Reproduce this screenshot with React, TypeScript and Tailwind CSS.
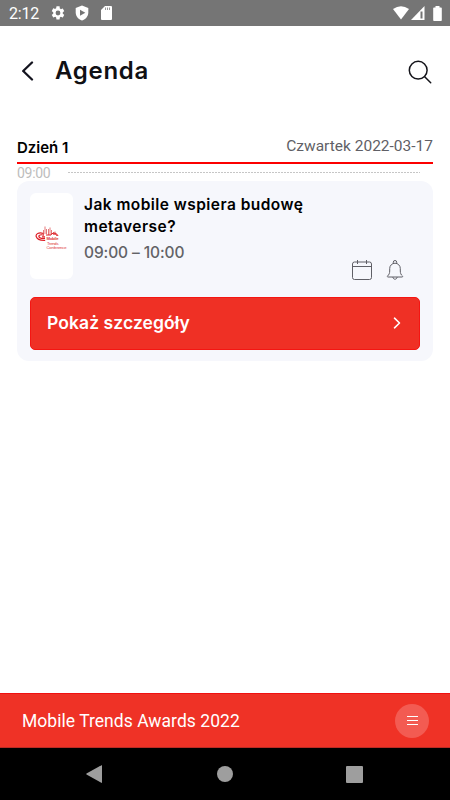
import React from "react";

const StatusBar = () => (
  <div className="flex h-[26px] items-center bg-[#757575] pl-[9px] pr-2 text-white">
    <span className="w-[41px] pt-[2px] text-[16px] leading-none tracking-[-0.2px]">2:12</span>
    <svg className="size-4" viewBox="0 0 24 24" fill="currentColor">
      <path d="M19.14 12.94c.04-.3.06-.61.06-.94s-.02-.64-.07-.94l2.03-1.58a.5.5 0 0 0 .12-.61l-1.92-3.32a.49.49 0 0 0-.59-.22l-2.39.96a7 7 0 0 0-1.62-.94l-.36-2.54A.48.48 0 0 0 13.92 2h-3.84a.47.47 0 0 0-.47.41l-.36 2.54c-.59.24-1.13.57-1.62.94l-2.39-.96a.48.48 0 0 0-.59.22L2.74 8.87a.48.48 0 0 0 .12.61l2.03 1.58a7 7 0 0 0 0 1.88l-2.03 1.58a.5.5 0 0 0-.12.61l1.92 3.32c.12.22.37.29.59.22l2.39-.96c.5.38 1.03.7 1.62.94l.36 2.54c.05.24.24.41.48.41h3.84c.24 0 .44-.17.47-.41l.36-2.54a7 7 0 0 0 1.62-.94l2.39.96c.22.08.47 0 .59-.22l1.92-3.32a.48.48 0 0 0-.12-.61zM12 15.6A3.6 3.6 0 1 1 12 8.4a3.6 3.6 0 0 1 0 7.2z" />
    </svg>
    <svg className="ml-[9px] h-4 w-[14px]" viewBox="0 0 14 16">
      <path d="M7 0.5 13.300 3v4.600C13.300 11.300 10.700 14.400 7 15.500 3.300 14.400.7 11.300.7 7.600V3z" fill="currentColor" />
      <path d="M5 4.700v6L10.300 7.700z" fill="#757575" />
    </svg>
    <svg className="ml-[12px] h-[14px] w-[11px]" viewBox="0 0 11 14">
      <path d="M4 0h6a1 1 0 0 1 1 1v12a1 1 0 0 1-1 1H1a1 1 0 0 1-1-1V4z" fill="currentColor" />
      <path d="M4.500 1.500v2.500M6.500 1.500v2.500M8.500 1.500v2.500" stroke="#9a9a9a" strokeWidth="1" />
    </svg>
    <svg className="ml-auto h-[14px] w-4" viewBox="0 0 16 14" fill="currentColor">
      <path d="M0 3Q8-2.600 16 3L8 13.500z" />
    </svg>
    <svg className="ml-[2px] h-[14px] w-[14px]" viewBox="0 0 14 14">
      <path d="M13.500 0v14H0z" fill="currentColor" />
      <path d="M10.500 5.500v7" stroke="#757575" strokeWidth="2" />
    </svg>
    <svg className="ml-[8px] h-[15px] w-[9px]" viewBox="0 0 9 15" fill="currentColor">
      <path d="M2.500 0h4v1.500H8a.8.8 0 0 1 .8.8v11.900a.8.8 0 0 1-.8.8H1a.8.8 0 0 1-.8-.8V2.300a.8.8 0 0 1 .8-.8h1.500z" />
    </svg>
  </div>
);

const Header = () => (
  <header className="flex h-[89px] items-center pl-[21px] pr-[18px]">
    <svg className="h-5 w-[13px]" viewBox="0 0 13 20" fill="none" stroke="#14141f" strokeWidth="2.300" strokeLinecap="round" strokeLinejoin="round">
      <path d="M11 1.500 2.200 10 11 18.500" />
    </svg>
    <h1 className="ml-[21px] font-[Inter] text-[24px] font-semibold leading-none tracking-[0.7px] text-[#101014]">Agenda</h1>
    <svg className="ml-auto mt-[3px] size-6" viewBox="0 0 24 24" fill="none" stroke="#14141a" strokeWidth="1.500" strokeLinecap="round">
      <circle cx="10.200" cy="10.200" r="8.900" />
      <path d="m16.700 16.700 6 6" />
    </svg>
  </header>
);

const ConferenceLogo = () => (
  <svg className="h-[26px] w-[34px]" viewBox="0 0 34 26" fill="none">
    <path d="M8.500 10V5M10 9V1.500M11.500 9V4M13.500 10V4M15 10V2.500M16.500 10V5M18.500 10V7M20 10V6.500" stroke="#e2696b" strokeWidth=".9" />
    <path d="M8.500 8.500C3.500 7 .5 9 1.200 11.500s4.500 4 9 3.800M9 10.200C6 9.200 3.300 10 4 11.800s3.300 1.900 6 1.600M10 11.800H7" stroke="#df2027" strokeWidth="1.200" />
    <path d="M11 10h5M16 9.500c2.500-2.500 6-1.500 7 1.500M19 9c1.500-.5 2.500.5 3 2" stroke="#df2027" />
    <g fill="#dc3236" className="font-['Liberation_Sans']" fontSize="4.200">
      <text x="11.500" y="15" fontWeight="bold" textLength="12">Mobile</text>
      <text x="12" y="19.500" textLength="11.500">Trends</text>
      <text x="11.500" y="24" textLength="20">Conference</text>
    </g>
  </svg>
);

const SessionCard = () => (
  <article className="mx-[17px] h-[180px] rounded-[12px] bg-[#f6f7fc] px-[13px] pt-3">
    <div className="flex h-[104px]">
      <div className="flex h-[86px] w-[43px] shrink-0 items-center justify-center rounded-md bg-white pt-[3px]">
        <ConferenceLogo />
      </div>
      <div className="ml-[11px] font-[Inter] whitespace-nowrap">
        <h2 className="pt-px text-[15.5px] font-semibold leading-[22px] tracking-[0.45px] text-black">
          Jak mobile wspiera budowę
          <br />
          metaverse?
        </h2>
        <p className="mt-[5px] text-[15.5px] font-medium leading-[20px] tracking-[-0.1px] text-[#626266]">09:00 – 10:00</p>
      </div>
      <div className="ml-auto flex gap-[14px] pr-4 pt-[67px]">
        <svg className="h-[21px] w-5" viewBox="0 0 20 21" fill="none" stroke="#5f5f66" strokeWidth="1">
          <rect x=".5" y="2" width="19" height="17.500" rx="2" />
          <path d="M.5 6.500h19M5.500 0v4M14.500 0v4" />
        </svg>
        <svg className="h-[21px] w-[18px]" viewBox="0 0 18 21" fill="none" stroke="#5f5f66" strokeWidth="1" strokeLinejoin="round">
          <path d="M1.500 16c1.600-1.200 2.200-3 2.200-5V8.500a5.300 5.300 0 0 1 10.600 0V11c0 2 .6 3.800 2.200 5 .4.500.1 1-.5 1H2c-.6 0-.9-.5-.5-1zM7.300 3.300V2.200a1.700 1.700 0 0 1 3.400 0v1.100M6.800 17c.3 1.400 1 2.200 2.200 2.200s1.900-.8 2.200-2.200" />
        </svg>
      </div>
    </div>
    <button className="flex h-[53px] w-full items-center justify-between rounded-[5px] border border-[#f51512] bg-[#ef3025] pb-[2px] pl-4 pr-[18px] text-white">
      <span className="font-[Inter] text-[17.5px] font-semibold leading-none tracking-[0.08px]">Pokaż szczegóły</span>
      <svg className="h-3 w-2" viewBox="0 0 8 12" fill="none" stroke="currentColor" strokeWidth="1.600" strokeLinecap="round" strokeLinejoin="round">
        <path d="m1.500 1.200 5 4.800-5 4.800" />
      </svg>
    </button>
  </article>
);

const BottomBar = () => (
  <footer className="mt-auto">
    <div className="flex h-[55px] items-center justify-between border-y border-t-[#f01010] border-b-[#b92b24] bg-[#ef3226] pl-[22px] pr-[21px] text-white">
      <span className="pt-[2px] text-[17.5px] leading-none tracking-[0.04px]">Mobile Trends Awards 2022</span>
      <button className="flex size-[34px] items-center justify-center rounded-full bg-[#f35b52]">
        <svg className="h-[9px] w-[11px]" viewBox="0 0 11 9" stroke="currentColor" strokeWidth="1">
          <path d="M0 .5h11M0 4.500h11M0 8.500h11" />
        </svg>
      </button>
    </div>
    <nav className="flex h-[52px] items-center bg-black pl-[86px] text-[#9e9e9e]">
      <svg className="h-[18px] w-4" viewBox="0 0 16 18" fill="currentColor">
        <path d="M16 .5v17a.5.5 0 0 1-.7.300L.5 9.400a.5.5 0 0 1 0-.8L15.300.2a.5.5 0 0 1 .7.300z" />
      </svg>
      <div className="ml-[115px] size-4 rounded-full bg-[#9e9e9e]" />
      <div className="ml-[113px] size-[17px] rounded-[1px] bg-[#9e9e9e]" />
    </nav>
  </footer>
);

const App = () => {
  return (
    <div className="flex h-[800px] w-[450px] flex-col overflow-hidden bg-white font-[Roboto]">
      <StatusBar />
      <Header />
      <section className="mx-[17px] mt-[15px] flex h-[34px] items-center justify-between border-b-2 border-[#fc0000] pt-px">
        <h2 className="pt-px font-[Inter] text-[15px] font-semibold leading-none text-black">Dzień 1</h2>
        <span className="pt-px text-[15.5px] leading-none text-[#5f5f66]">Czwartek 2022-03-17</span>
      </section>
      <div className="flex h-[17px] items-center pl-[17px] pr-[30px]">
        <span className="w-[51px] text-[14px] leading-none tracking-[-0.3px] text-[#bdbdbd]">09:00</span>
        <svg className="h-px flex-1" stroke="#c6c6c6" strokeWidth="2">
          <line x1="0" y1=".5" x2="352" y2=".5" strokeDasharray="2 1" />
        </svg>
      </div>
      <SessionCard />
      <BottomBar />
    </div>
  );
};

export default App;
